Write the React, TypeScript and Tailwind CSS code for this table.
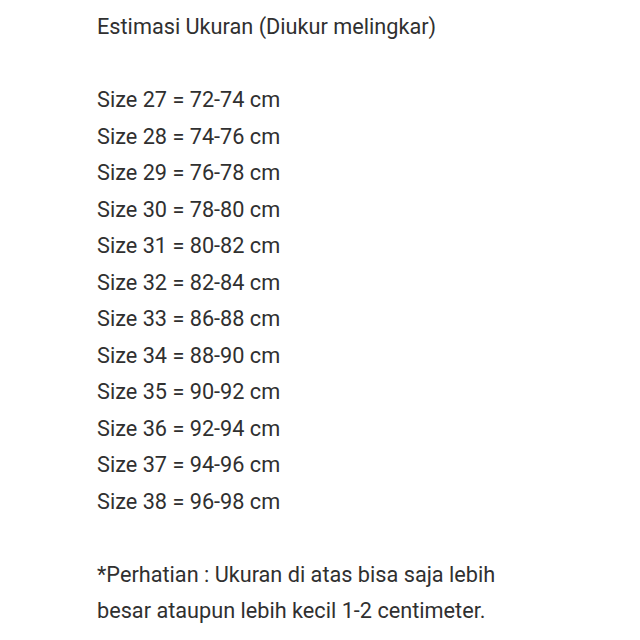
import React from "react";

const sizes = [
  ["27", "72-74"],
  ["28", "74-76"],
  ["29", "76-78"],
  ["30", "78-80"],
  ["31", "80-82"],
  ["32", "82-84"],
  ["33", "86-88"],
  ["34", "88-90"],
  ["35", "90-92"],
  ["36", "92-94"],
  ["37", "94-96"],
  ["38", "96-98"],
];

export default function App() {
  return (
    <div className="w-[640px] h-[640px] bg-white overflow-hidden pt-[9px] pl-[97px] text-[21.7px] leading-[36.5px] text-[#303030] [font-family:Roboto,'Liberation_Sans',sans-serif]">
      <p>Estimasi Ukuran (Diukur melingkar)</p>
      <p>&nbsp;</p>
      {sizes.map(([s, r]) => (
        <p key={s}>
          Size {s} = {r} cm
        </p>
      ))}
      <p>&nbsp;</p>
      <p>*Perhatian : Ukuran di atas bisa saja lebih</p>
      <p>besar ataupun lebih kecil 1-2 centimeter.</p>
    </div>
  );
}
